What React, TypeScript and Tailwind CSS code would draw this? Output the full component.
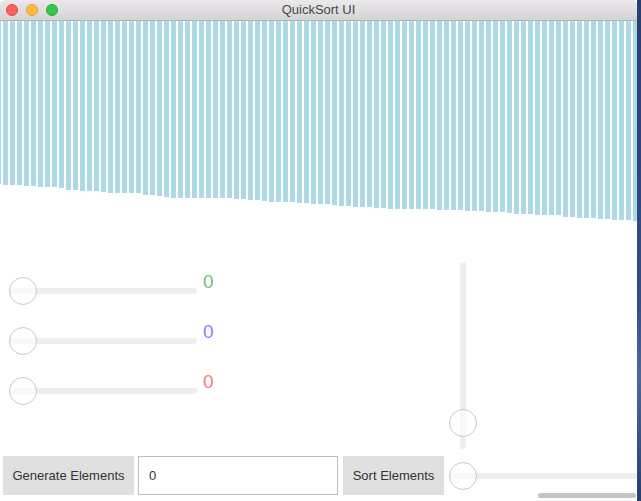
import React from 'react'

// bottom edge (page y) of each bar, read off the sorted array
const bottoms = [
  184, 185, 185, 185, 186, 186, 187, 187, 187, 188, 190, 190, 191, 191, 191, 192,
  193, 193, 193, 193, 193, 195, 195, 196, 197, 198, 198, 198, 198, 198, 198, 198,
  198, 198, 199, 199, 200, 200, 201, 202, 202, 202, 202, 203, 203, 204, 204, 204,
  205, 206, 206, 207, 207, 207, 208, 208, 209, 209, 209, 209, 209, 209, 209, 210,
  210, 210, 210, 211, 211, 211, 212, 212, 212, 213, 214, 214, 214, 215, 215, 215,
  215, 217, 217, 218, 218, 218, 219, 219, 220, 220, 220, 221,
]
const heights = bottoms.map((b) => b - 21)

function Thumb({ className = '' }: { className?: string }) {
  return (
    <div
      className={`absolute w-[28px] h-[28px] rounded-full border border-[#c8c8c8] bg-white/60 ${className}`}
    />
  )
}

function HSlider({ width }: { width: number }) {
  return (
    <div className="relative h-[28px] flex items-center" style={{ width }}>
      <div className="h-[6px] w-full ml-[1px] rounded-full bg-[#eeeeee]" />
      <Thumb className="left-0 top-0" />
    </div>
  )
}

function ValueSlider({ color }: { color: string }) {
  return (
    <div className="flex items-start">
      <HSlider width={188} />
      <span className={`-mt-[5px] ml-[6px] text-[19px] leading-none ${color}`}>0</span>
    </div>
  )
}

export default function App() {
  return (
    <div className="w-[641px] h-[501px] flex overflow-hidden bg-white font-['Liberation_Sans',Arial,sans-serif]">
      <div className="relative w-[637px] h-full flex flex-col bg-white">
        {/* title bar */}
        <div className="relative h-[21px] shrink-0 flex items-center justify-center border-b border-[#b4b4b4] bg-[linear-gradient(#ebe9eb,#d5d3d5)] rounded-t-[5px]">
          <div className="absolute left-[6px] top-[4px] flex gap-[8px]">
            <div className="w-[12px] h-[12px] rounded-full bg-[#fc605c] border border-[#de4a45]" />
            <div className="w-[12px] h-[12px] rounded-full bg-[#fdbc40] border border-[#dea034]" />
            <div className="w-[12px] h-[12px] rounded-full bg-[#34c84a] border border-[#27aa37]" />
          </div>
          <span className="text-[13px] text-[#4a4a4a]">QuickSort UI</span>
        </div>

        {/* bars */}
        <div className="h-[200px] shrink-0 flex items-start gap-[2px] -ml-[4px] overflow-hidden">
          {heights.map((h, i) => (
            <div key={i} className="w-[5px] shrink-0 bg-[#add8e6]" style={{ height: h }} />
          ))}
        </div>

        {/* sliders */}
        <div className="h-[235px] shrink-0 flex">
          <div className="w-[449px] flex flex-col gap-[22px] pt-[56px] pl-[9px]">
            <ValueSlider color="text-[#72c172]" />
            <ValueSlider color="text-[#8585ff]" />
            <ValueSlider color="text-[#f57d7d]" />
          </div>
          <div className="relative w-[28px] h-[187px] mt-[41px] flex justify-center">
            <div className="w-[6px] h-full rounded-full bg-[#eeeeee]" />
            <Thumb className="left-0 top-[147px]" />
          </div>
        </div>

        {/* bottom controls */}
        <div className="h-[39px] shrink-0 flex items-center pl-[3px] text-[13px] text-[#333333]">
          <button className="w-[131px] h-full bg-[#e0e0e0]">Generate Elements</button>
          <input
            className="ml-[4px] w-[200px] h-full border border-[#bdbdbd] pl-[10px] outline-none text-[#333333]"
            defaultValue="0"
          />
          <button className="ml-[5px] w-[101px] h-full bg-[#e0e0e0]">Sort Elements</button>
          <div className="ml-[5px]">
            <HSlider width={188} />
          </div>
        </div>

        <div className="absolute right-[1px] bottom-[3px] w-[98px] h-[5px] rounded-full bg-[#c4c4c4]" />
      </div>
      <div className="flex-1 bg-[linear-gradient(#263f6e,#2f4f86_60%,#4a6a9a_75%,#22406e)]" />
    </div>
  )
}
